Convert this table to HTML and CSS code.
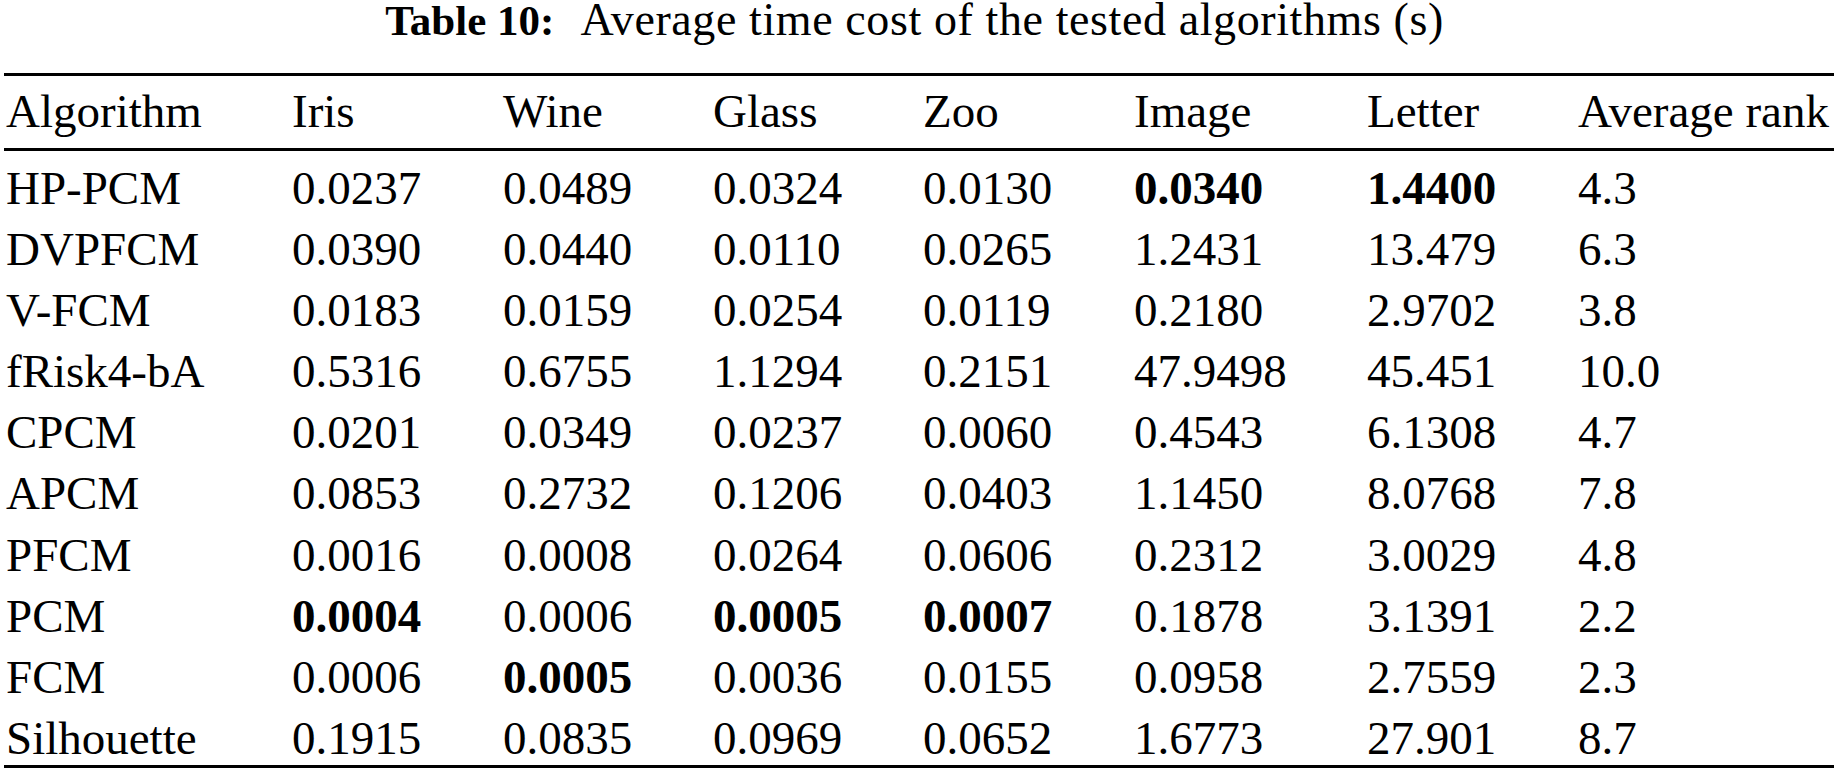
FILE: index.html
```html
<!DOCTYPE html>
<html lang="en">
<head>
<meta charset="utf-8">
<title>Table 10</title>
<link rel="stylesheet" href="styles.css">
</head>
<body>
<div class="page">
  <div class="caption"><span class="cap-label">Table 10:</span><span class="cap-text">Average time cost of the tested algorithms (s)</span></div>
  <div class="table">
    <div class="thead grid">
      <div class="c first">Algorithm</div>
      <div class="c">Iris</div>
      <div class="c">Wine</div>
      <div class="c">Glass</div>
      <div class="c">Zoo</div>
      <div class="c">Image</div>
      <div class="c">Letter</div>
      <div class="c">Average rank</div>
    </div>
    <div class="tbody grid">
      <div class="c first">HP-PCM</div><div class="c">0.0237</div><div class="c">0.0489</div><div class="c">0.0324</div><div class="c">0.0130</div><div class="c b">0.0340</div><div class="c b">1.4400</div><div class="c">4.3</div>
      <div class="c first">DVPFCM</div><div class="c">0.0390</div><div class="c">0.0440</div><div class="c">0.0110</div><div class="c">0.0265</div><div class="c">1.2431</div><div class="c">13.479</div><div class="c">6.3</div>
      <div class="c first">V-FCM</div><div class="c">0.0183</div><div class="c">0.0159</div><div class="c">0.0254</div><div class="c">0.0119</div><div class="c">0.2180</div><div class="c">2.9702</div><div class="c">3.8</div>
      <div class="c first">fRisk4-bA</div><div class="c">0.5316</div><div class="c">0.6755</div><div class="c">1.1294</div><div class="c">0.2151</div><div class="c">47.9498</div><div class="c">45.451</div><div class="c">10.0</div>
      <div class="c first">CPCM</div><div class="c">0.0201</div><div class="c">0.0349</div><div class="c">0.0237</div><div class="c">0.0060</div><div class="c">0.4543</div><div class="c">6.1308</div><div class="c">4.7</div>
      <div class="c first">APCM</div><div class="c">0.0853</div><div class="c">0.2732</div><div class="c">0.1206</div><div class="c">0.0403</div><div class="c">1.1450</div><div class="c">8.0768</div><div class="c">7.8</div>
      <div class="c first">PFCM</div><div class="c">0.0016</div><div class="c">0.0008</div><div class="c">0.0264</div><div class="c">0.0606</div><div class="c">0.2312</div><div class="c">3.0029</div><div class="c">4.8</div>
      <div class="c first">PCM</div><div class="c b">0.0004</div><div class="c">0.0006</div><div class="c b">0.0005</div><div class="c b">0.0007</div><div class="c">0.1878</div><div class="c">3.1391</div><div class="c">2.2</div>
      <div class="c first">FCM</div><div class="c">0.0006</div><div class="c b">0.0005</div><div class="c">0.0036</div><div class="c">0.0155</div><div class="c">0.0958</div><div class="c">2.7559</div><div class="c">2.3</div>
      <div class="c first">Silhouette</div><div class="c">0.1915</div><div class="c">0.0835</div><div class="c">0.0969</div><div class="c">0.0652</div><div class="c">1.6773</div><div class="c">27.901</div><div class="c">8.7</div>
    </div>
  </div>
</div>
</body>
</html>
```

FILE: styles.css
```css
html, body {
  margin: 0;
  padding: 0;
  background: #ffffff;
  color: #000000;
}

.page {
  font-family: "Liberation Serif", "Times New Roman", serif;
  width: 1837px;
}

.caption {
  display: flex;
  justify-content: center;
  align-items: baseline;
  height: 40px;
  line-height: 40px;
  margin-bottom: 33px;
  padding-right: 8px;
  white-space: nowrap;
}

.cap-label {
  font-weight: bold;
  font-size: 43px;
  margin-right: 26px;
}

.cap-text {
  font-size: 46px;
  letter-spacing: 0.6px;
}

.table {
  margin: 0 3px 0 4px;
  font-size: 47px;
}

.grid {
  display: grid;
  grid-template-columns: 288px 211px 210px 210px 211px 233px 211px 1fr;
}

.c {
  line-height: 50px;
  white-space: nowrap;
}

.c.first {
  padding-left: 2px;
}

.c.b {
  font-weight: bold;
}

.thead {
  border-top: 3px solid #000;
  border-bottom: 3px solid #000;
  padding: 10px 0 12px;
}

.tbody {
  row-gap: 11.1px;
  padding: 12px 0 2px;
  border-bottom: 3px solid #000;
}
```
